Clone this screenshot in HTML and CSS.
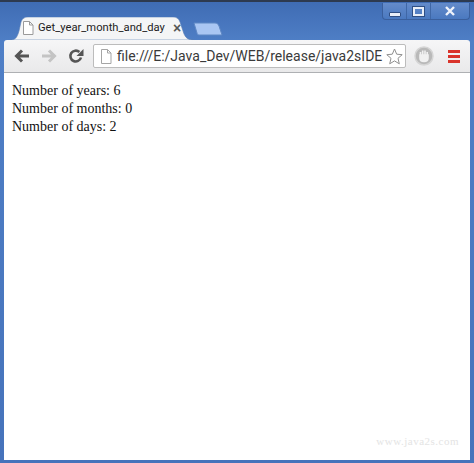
FILE: index.html
```html
<!DOCTYPE html>
<html lang="en">
<head>
  <meta charset="UTF-8" />
  <title>Get_year_month_and_day</title>
  <link rel="stylesheet" href="styles.css">
</head>
<body>

  <div class="window">
    <!-- Title bar with tabs and window buttons -->
    <div class="titlebar">
      <div class="tabs">
        <div class="tab">
          <svg class="tab-shape" width="184" height="23" viewBox="0 0 184 23">
            <path d="M0 23 C5 23 7 21 9 14 L11 5 C12 2 14 0 18 0 L163 0 C167 0 169 2 170 5 L173 14 C175 21 178 23 184 23 Z" fill="#f4f5f6" stroke="#5b7fb5" stroke-width="0.6" />
          </svg>
          <svg class="page-icon" width="12" height="14" viewBox="0 0 12 14">
            <path d="M1.5 .5 H7.5 L11 4 V13.5 H1.5 Z M7.5 .5 V4 H11" fill="#fff" stroke="#9a9a9a" />
          </svg>
          <span class="tab-title">Get_year_month_and_day</span>
          <span class="tab-close">&times;</span>
        </div>
        <svg class="new-tab" width="30" height="14" viewBox="0 0 30 14">
          <path d="M1 1 H22 C24 1 25 2 26 4 L29 13 H6 C5 13 4 12 4 11 Z" fill="#a9c6f3" stroke="#5f88c4" />
        </svg>
      </div>
      <div class="win-buttons">
        <div class="win-btn win-min"><span class="min-glyph"></span></div>
        <div class="win-btn win-max"><span class="max-glyph"></span></div>
        <div class="win-btn win-close">
          <svg width="12" height="10" viewBox="0 0 12 10">
            <path d="M2 1 L10 9 M10 1 L2 9" stroke="#eef3fb" stroke-width="2.4" fill="none" />
          </svg>
        </div>
      </div>
    </div>

    <!-- Toolbar -->
    <div class="toolbar">
      <svg class="nav-icon" width="16" height="14" viewBox="0 0 16 14">
        <path d="M15 7 H4 M8 1.5 L2.5 7 L8 12.5" stroke="#555" stroke-width="3" fill="none" />
      </svg>
      <svg class="nav-icon" width="16" height="14" viewBox="0 0 16 14">
        <path d="M1 7 H12 M8 1.5 L13.5 7 L8 12.5" stroke="#c4c4c4" stroke-width="3" fill="none" />
      </svg>
      <svg class="nav-icon nav-reload" width="16" height="16" viewBox="0 0 16 16">
        <path d="M13 9.5 A5.4 5.4 0 1 1 11.4 4" stroke="#555" stroke-width="2.6" fill="none" />
        <path d="M15.5 1 V8 H8.5 Z" fill="#555" />
      </svg>
      <div class="address">
        <svg class="page-icon" width="12" height="15" viewBox="0 0 12 15">
          <path d="M1.5 .5 H7.5 L11 4 V14.5 H1.5 Z M7.5 .5 V4 H11" fill="#fff" stroke="#a5a5a5" />
        </svg>
        <span class="url">file:///E:/Java_Dev/WEB/release/java2sIDE</span>
        <svg class="star" width="17" height="17" viewBox="0 0 17 17">
          <path d="M8.5 1 L10.7 6.2 L16.2 6.7 L12 10.3 L13.3 15.8 L8.5 12.9 L3.7 15.8 L5 10.3 L.8 6.7 L6.3 6.2 Z" fill="#fff" stroke="#8f8f8f" />
        </svg>
      </div>
      <svg class="ext-icon" width="20" height="20" viewBox="0 0 20 20">
        <circle cx="10" cy="10" r="9" fill="#b9b9b9" stroke="#d5d5d5" stroke-width="1.5" />
        <path d="M6.5 9 V6 M8.7 8.5 V4.5 M11 8.5 V4.5 M13.2 9 V6 M6 9 H14 V12 C14 14.5 12 15.5 10 15.5 C8 15.5 6 14.5 6 12 Z" stroke="#f1f1f1" stroke-width="1.6" fill="#f1f1f1" />
      </svg>
      <div class="menu-icon">
        <span></span>
        <span></span>
        <span></span>
      </div>
    </div>

    <!-- Page content -->
    <div class="content">
      <div class="lines">
        <div>Number of years: 6</div>
        <div>Number of months: 0</div>
        <div>Number of days: 2</div>
      </div>
      <div class="watermark">www.java2s.com</div>
    </div>
  </div>

</body>
</html>
```

FILE: styles.css
```css
body {
  margin: 0;
  background: #fff;
}

.window {
  width: 474px;
  height: 463px;
  display: flex;
  flex-direction: column;
  overflow: hidden;
  box-sizing: border-box;
  padding: 0 4px 3px 4px;
  border-top: 2px solid #2d3a50;
  background: linear-gradient(#3f6cb4 0, #4f7fc6 40px, #4673bb 100%);
}

.titlebar {
  height: 38px;
  display: flex;
  justify-content: space-between;
  align-items: flex-start;
}

.tabs {
  display: flex;
  align-items: flex-start;
  margin: 15px 0 0 6px;
}

.tab {
  position: relative;
  width: 184px;
  height: 23px;
  display: flex;
  align-items: center;
  box-sizing: border-box;
  padding: 0 0 2px 12px;
}

.tab-shape {
  position: absolute;
  top: 0;
  left: 0;
}

.tab .page-icon {
  position: relative;
  flex: none;
}

.tab-title {
  position: relative;
  width: 128px;
  margin-left: 4px;
  white-space: nowrap;
  font: 11.2px Roboto, sans-serif;
  color: #222;
}

.tab-close {
  position: relative;
  margin-left: 7px;
  font: bold 14px "Liberation Sans", sans-serif;
  color: #555;
}

.new-tab {
  margin: 5px 0 0 -1px;
}

.win-buttons {
  display: flex;
  height: 16px;
  margin-top: 1px;
  border: 1px solid #3a5f9c;
  border-top: none;
  border-radius: 0 0 4px 4px;
  background: linear-gradient(#648bca, #4a79c0);
}

.win-btn {
  display: flex;
  align-items: center;
  justify-content: center;
  border-left: 1px solid #3f67a6;
}

.win-btn:first-child {
  border-left: none;
}

.win-min { width: 23px; }
.win-max { width: 23px; }
.win-close { width: 38px; }

.min-glyph {
  width: 10px;
  height: 3px;
  margin-top: 6px;
  background: #e8eef8;
  border: 1px solid #2f4f85;
  border-radius: 1px;
}

.max-glyph {
  width: 7px;
  height: 5px;
  border: 2px solid #e8eef8;
  outline: 1px solid #2f4f85;
}

.toolbar {
  height: 33px;
  display: flex;
  align-items: center;
  box-sizing: border-box;
  padding: 0 10px;
  background: linear-gradient(#f6f6f7, #e9e9ea);
  border-bottom: 1px solid #aeb0b3;
  border-radius: 3px 3px 0 0;
}

.nav-icon {
  flex: none;
  margin-right: 11px;
}

.nav-reload {
  margin-right: 9px;
}

.address {
  width: 313px;
  height: 24px;
  flex: none;
  display: flex;
  align-items: center;
  box-sizing: border-box;
  padding: 0 2px 0 6px;
  background: #fff;
  border: 1px solid #bcbcbc;
  border-radius: 2px;
}

.address .page-icon {
  flex: none;
}

.url {
  width: 266px;
  margin-left: 5px;
  white-space: nowrap;
  font: 14px Roboto, sans-serif;
  color: #3a3a3a;
}

.star {
  flex: none;
  margin-left: 3px;
}

.ext-icon {
  flex: none;
  margin-left: 8px;
}

.menu-icon {
  display: flex;
  flex-direction: column;
  gap: 2px;
  margin-left: 14px;
}

.menu-icon span {
  width: 12px;
  height: 3px;
  background: #d9342b;
}

.content {
  flex: 1;
  display: flex;
  flex-direction: column;
  justify-content: space-between;
  background: #fff;
  padding: 9px 11px 13px 8px;
}

.lines {
  font: 14px/18px "Liberation Serif", serif;
  color: #111;
}

.watermark {
  align-self: flex-end;
  font: 11px "Liberation Serif", serif;
  letter-spacing: 0.5px;
  color: #e4e4e4;
}
```
